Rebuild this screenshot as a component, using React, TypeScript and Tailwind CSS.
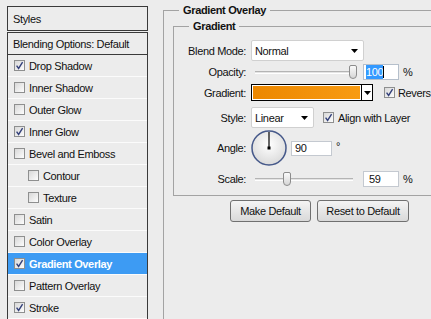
import React from "react";

/* ---------- Small controls ---------- */

function Check({ on }: { on?: boolean }) {
  return (
    <span className="flex h-[11px] w-[11px] shrink-0 items-center justify-center border border-[#8e8f8f] bg-gradient-to-br from-[#d8d8d8] to-[#fdfdfd]">
      {on && (
        <svg width="9" height="9" viewBox="0 0 9 9">
          <path d="M1.6 4.6 L3.6 7.4 L7.6 1.2" fill="none" stroke="#33407a" strokeWidth="1.4" />
        </svg>
      )}
    </span>
  );
}

function Arrow() {
  return (
    <svg width="7" height="4" viewBox="0 0 7 4">
      <path d="M0 0 H7 L3.5 4 Z" fill="#000" />
    </svg>
  );
}

function Slider({ thumb }: { thumb: number }) {
  // thumb is px offset from the slider's left edge
  return (
    <div className="relative h-[16px] w-[108px]">
      <div className="absolute left-[4px] top-[7px] h-[3px] w-[98px] border-t border-[#b4b4b4] bg-[#e4e4e4] border-b border-b-white" />
      <div
        className="absolute top-[1px] h-[14px] w-[8px] rounded-t-[2px] rounded-b-[4px] border border-[#8c8c8c] bg-gradient-to-b from-[#fafafa] to-[#d6d6d6]"
        style={{ left: thumb }}
      />
    </div>
  );
}

/* ---------- Data ---------- */

type StyleRow = { label: string; on?: boolean; indent?: boolean; active?: boolean };

const rows: StyleRow[] = [
  { label: "Drop Shadow", on: true },
  { label: "Inner Shadow" },
  { label: "Outer Glow" },
  { label: "Inner Glow", on: true },
  { label: "Bevel and Emboss" },
  { label: "Contour", indent: true },
  { label: "Texture", indent: true },
  { label: "Satin" },
  { label: "Color Overlay" },
  { label: "Gradient Overlay", on: true, active: true },
  { label: "Pattern Overlay" },
  { label: "Stroke", on: true },
];

/* ---------- App ---------- */

export default function App() {
  return (
    <div className="flex h-[319px] w-[431px] overflow-hidden bg-[#ececec] text-[11px] leading-[14px] tracking-[-0.35px] text-[#111] [font-family:'Liberation_Sans',Arial,sans-serif]">
      {/* Styles list */}
      <div className="ml-[7px] mt-[6px] flex w-[141px] shrink-0 flex-col">
        <div className="flex h-[25px] items-center border border-[#3a3a3a] pl-[5px]">Styles</div>
        <div className="mt-[1px] flex-1 border-x border-t border-[#3a3a3a]">
          <div className="flex h-[22px] items-center border-b border-[#3a3a3a] pl-[5px]">
            Blending Options: Default
          </div>
          {rows.map((r) => (
            <div
              key={r.label}
              className={`flex h-[22px] items-center gap-[4px] border-b border-[#fbfbfb] ${r.indent ? "pl-[20px]" : "pl-[6px]"} ${r.active ? "bg-[#3d9bf3] font-bold text-white" : ""}`}
            >
              <Check on={r.on} />
              <span>{r.label}</span>
            </div>
          ))}
        </div>
      </div>

      {/* Gradient Overlay panel */}
      <fieldset className="ml-[15px] mt-[3px] h-[340px] w-[300px] shrink-0 border border-[#a3a3a3]">
        <legend className="ml-[15px] px-[4px] font-bold">Gradient Overlay</legend>

        <fieldset className="ml-[9px] mt-[2px] w-[300px] border border-[#a3a3a3] pb-[8px] pt-[7px]">
          <legend className="ml-[15px] px-[4px] font-bold">Gradient</legend>

          {/* Blend Mode */}
          <div className="flex h-[21px] items-center">
            <span className="w-[72px] text-right">Blend Mode:</span>
            <div className="ml-[5px] flex h-[21px] w-[113px] items-center justify-between rounded-[2px] border border-[#d0d0d0] bg-white pl-[3px] pr-[5px]">
              <span>Normal</span>
              <Arrow />
            </div>
          </div>

          {/* Opacity */}
          <div className="mt-[2px] flex h-[17px] items-center">
            <span className="w-[72px] text-right">Opacity:</span>
            <div className="ml-[5px]">
              <Slider thumb={98} />
            </div>
            <div className="ml-[4px] flex h-[16px] w-[36px] items-center border border-[#b5bfcb] bg-white pl-[2px]">
              <span className="bg-[#3399ff] text-white">100</span>
              <span className="h-[12px] w-[1px] bg-black" />
            </div>
            <span className="ml-[4px]">%</span>
          </div>

          {/* Gradient */}
          <div className="mt-[4px] flex h-[17px] items-center">
            <span className="w-[72px] text-right">Gradient:</span>
            <div className="ml-[5px] flex h-[17px] w-[122px] border border-black bg-white">
              <div className="m-[1px] flex-1 bg-gradient-to-r from-[#ec8700] to-[#f89b12]" />
              <div className="flex w-[11px] items-center justify-center border-l border-black">
                <Arrow />
              </div>
            </div>
            <span className="ml-[11px]">
              <Check on />
            </span>
            <span className="ml-[3px] whitespace-nowrap">Reverse</span>
          </div>

          {/* Style */}
          <div className="mt-[6px] flex h-[21px] items-center">
            <span className="w-[72px] text-right">Style:</span>
            <div className="ml-[5px] flex h-[21px] w-[63px] items-center justify-between rounded-[2px] border border-[#d0d0d0] bg-white pl-[3px] pr-[5px]">
              <span>Linear</span>
              <Arrow />
            </div>
            <span className="ml-[9px]">
              <Check on />
            </span>
            <span className="ml-[4px]">Align with Layer</span>
          </div>

          {/* Angle */}
          <div className="mt-[2px] flex h-[36px] items-center">
            <span className="w-[72px] text-right">Angle:</span>
            <div className="ml-[5px] h-[36px] w-[36px]">
              <svg width="36" height="36" viewBox="0 0 36 36">
                <defs>
                  <radialGradient id="dial" cx="50%" cy="40%" r="60%">
                    <stop offset="0%" stopColor="#ffffff" />
                    <stop offset="100%" stopColor="#dadada" />
                  </radialGradient>
                </defs>
                <circle cx="18" cy="18" r="17" fill="url(#dial)" stroke="#46598a" strokeWidth="1.5" />
                <line x1="18" y1="18" x2="18" y2="2" stroke="#000" strokeWidth="1.2" />
                <rect x="16.5" y="16.5" width="3" height="3" fill="#000" />
              </svg>
            </div>
            <div className="ml-[4px] flex h-[15px] w-[41px] items-center border border-[#c4c9d0] bg-white pl-[3px]">90</div>
            <span className="ml-[4px] self-start pt-[9px]">°</span>
          </div>

          {/* Scale */}
          <div className="mt-[4px] flex h-[17px] items-center">
            <span className="w-[72px] text-right">Scale:</span>
            <div className="ml-[5px]">
              <Slider thumb={32} />
            </div>
            <div className="ml-[4px] flex h-[16px] w-[36px] items-center border border-[#c4c9d0] bg-white pl-[5px]">59</div>
            <span className="ml-[4px]">%</span>
          </div>
        </fieldset>

        {/* Buttons */}
        <div className="ml-[66px] mt-[4px] flex gap-[6px]">
          <button className="h-[22px] w-[81px] rounded-[3px] border border-[#707070] bg-gradient-to-b from-[#f4f4f4] to-[#d9d9d9] text-center">
            Make Default
          </button>
          <button className="h-[22px] w-[92px] rounded-[3px] border border-[#707070] bg-gradient-to-b from-[#f4f4f4] to-[#d9d9d9] text-center">
            Reset to Default
          </button>
        </div>
      </fieldset>
    </div>
  );
}
